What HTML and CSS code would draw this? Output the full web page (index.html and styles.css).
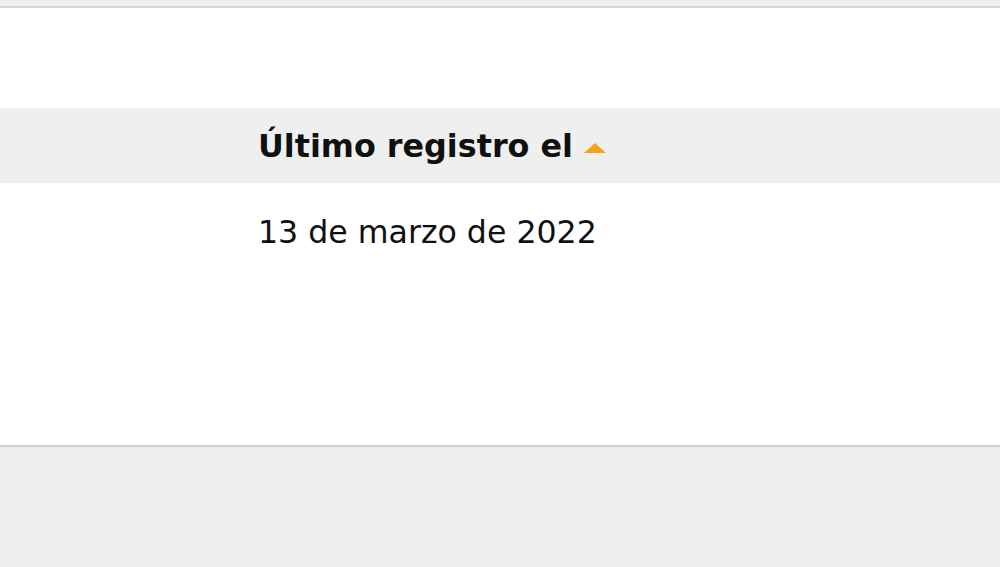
FILE: index.html
```html
<!DOCTYPE html>
<html>
<head>
  <title>Registro</title>
  <link rel="stylesheet" href="styles.css">
</head>
<body>
  <div class="topbar"></div>
  <div class="panel">
    <table class="records">
      <tr class="head">
        <th class="spacer"></th>
        <th class="col">Último registro el <span class="sort"></span></th>
      </tr>
      <tr>
        <td class="spacer"></td>
        <td class="col">13 de marzo de 2022</td>
      </tr>
    </table>
  </div>
  <div class="footer"></div>
</body>
</html>
```

FILE: styles.css
```css
html, body {
  margin: 0;
  height: 100%;
}
body {
  background-color: #eeefee;
  font-family: "DejaVu Sans", "Noto Sans", sans-serif;
  color: #0f1111;
}
.topbar {
  height: 6px;
  background-color: #eeefee;
  border-bottom: 2px solid #d5d7d7;
}
.panel {
  background-color: #fff;
  padding-top: 100px;
  height: 337px;
  border-bottom: 2px solid #cfd1d1;
}
.records {
  width: 100%;
  border-collapse: collapse;
}
.spacer {
  width: 258px;
  padding: 0;
}
.records th, .records td {
  text-align: left;
  padding: 0;
}
.head {
  background-color: #efefef;
  height: 75px;
}
.head th {
  font-size: 31.8px;
  font-weight: 700;
}
.records td {
  font-size: 31.6px;
  font-weight: 400;
  height: 98px;
  padding-bottom: 0;
}
.sort {
  display: inline-block;
  width: 0;
  height: 0;
  border-left: 11px solid transparent;
  border-right: 11px solid transparent;
  border-bottom: 10px solid #f7a21b;
  vertical-align: middle;
  margin-left: 0;
}
```
